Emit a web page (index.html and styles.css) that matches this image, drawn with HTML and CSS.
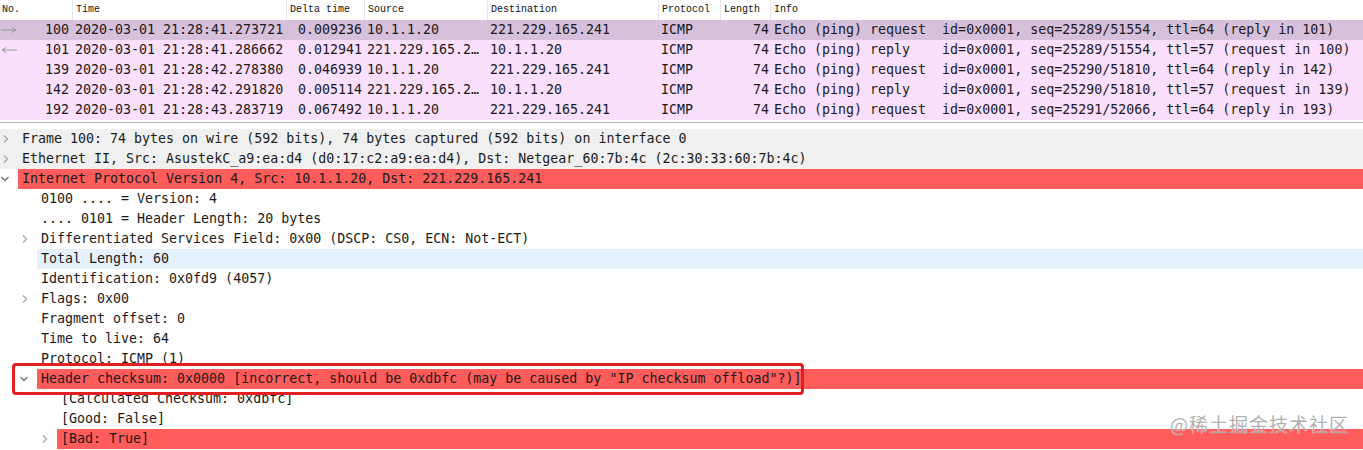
FILE: index.html
```html
<!DOCTYPE html>
<html>
<head>
<meta charset="utf-8">
<link rel="stylesheet" href="styles.css">
</head>
<body>
<div class="app">
  <div class="plist">
    <div class="prow head">
      <div class="c c-no">No.</div>
      <div class="c c-time">Time</div>
      <div class="c c-delta">Delta time</div>
      <div class="c c-src">Source</div>
      <div class="c c-dst">Destination</div>
      <div class="c c-proto">Protocol</div>
      <div class="c c-len">Length</div>
      <div class="c c-info">Info</div>
    </div>
    <div class="prow data sel">
      <div class="c c-no"><svg class="rel" width="18" height="8" viewBox="0 0 18 8"><path d="M1 4H16M12 1.5L16 4L12 6.5" fill="none" stroke="#9a9a9a" stroke-width="1"/></svg><span>100</span></div>
      <div class="c c-time">2020-03-01 21:28:41.273721</div>
      <div class="c c-delta">0.009236</div>
      <div class="c c-src">10.1.1.20</div>
      <div class="c c-dst">221.229.165.241</div>
      <div class="c c-proto">ICMP</div>
      <div class="c c-len">74</div>
      <div class="c c-info">Echo (ping) request  id=0x0001, seq=25289/51554, ttl=64 (reply in 101)</div>
    </div>
    <div class="prow data">
      <div class="c c-no"><svg class="rel" width="18" height="8" viewBox="0 0 18 8"><path d="M2 4H17M6 1.5L2 4L6 6.5" fill="none" stroke="#9a9a9a" stroke-width="1"/></svg><span>101</span></div>
      <div class="c c-time">2020-03-01 21:28:41.286662</div>
      <div class="c c-delta">0.012941</div>
      <div class="c c-src">221.229.165.241</div>
      <div class="c c-dst">10.1.1.20</div>
      <div class="c c-proto">ICMP</div>
      <div class="c c-len">74</div>
      <div class="c c-info">Echo (ping) reply    id=0x0001, seq=25289/51554, ttl=57 (request in 100)</div>
    </div>
    <div class="prow data">
      <div class="c c-no"><span>139</span></div>
      <div class="c c-time">2020-03-01 21:28:42.278380</div>
      <div class="c c-delta">0.046939</div>
      <div class="c c-src">10.1.1.20</div>
      <div class="c c-dst">221.229.165.241</div>
      <div class="c c-proto">ICMP</div>
      <div class="c c-len">74</div>
      <div class="c c-info">Echo (ping) request  id=0x0001, seq=25290/51810, ttl=64 (reply in 142)</div>
    </div>
    <div class="prow data">
      <div class="c c-no"><span>142</span></div>
      <div class="c c-time">2020-03-01 21:28:42.291820</div>
      <div class="c c-delta">0.005114</div>
      <div class="c c-src">221.229.165.241</div>
      <div class="c c-dst">10.1.1.20</div>
      <div class="c c-proto">ICMP</div>
      <div class="c c-len">74</div>
      <div class="c c-info">Echo (ping) reply    id=0x0001, seq=25290/51810, ttl=57 (request in 139)</div>
    </div>
    <div class="prow data">
      <div class="c c-no"><span>192</span></div>
      <div class="c c-time">2020-03-01 21:28:43.283719</div>
      <div class="c c-delta">0.067492</div>
      <div class="c c-src">10.1.1.20</div>
      <div class="c c-dst">221.229.165.241</div>
      <div class="c c-proto">ICMP</div>
      <div class="c c-len">74</div>
      <div class="c c-info">Echo (ping) request  id=0x0001, seq=25291/52066, ttl=64 (reply in 193)</div>
    </div>
  </div>

  <div class="splitter"></div>

  <div class="tree">
    <div class="trow l0 grey">
      <span class="tw"><svg class="chev" width="8" height="10" viewBox="0 0 8 10"><path d="M2 1.5L5.5 5L2 8.5" fill="none" stroke="#a8a8a8" stroke-width="1.3"/></svg></span>
      <span class="lbl">Frame 100: 74 bytes on wire (592 bits), 74 bytes captured (592 bits) on interface 0</span>
    </div>
    <div class="trow l0 grey">
      <span class="tw"><svg class="chev" width="8" height="10" viewBox="0 0 8 10"><path d="M2 1.5L5.5 5L2 8.5" fill="none" stroke="#a8a8a8" stroke-width="1.3"/></svg></span>
      <span class="lbl">Ethernet II, Src: AsustekC_a9:ea:d4 (d0:17:c2:a9:ea:d4), Dst: Netgear_60:7b:4c (2c:30:33:60:7b:4c)</span>
    </div>
    <div class="trow l0">
      <span class="tw"><svg class="chev" width="10" height="8" viewBox="0 0 10 8"><path d="M1.5 2L5 5.5L8.5 2" fill="none" stroke="#707070" stroke-width="1.3"/></svg></span>
      <span class="lbl red">Internet Protocol Version 4, Src: 10.1.1.20, Dst: 221.229.165.241</span>
    </div>
    <div class="trow l1">
      <span class="tw"></span>
      <span class="lbl">0100 .... = Version: 4</span>
    </div>
    <div class="trow l1">
      <span class="tw"></span>
      <span class="lbl">.... 0101 = Header Length: 20 bytes</span>
    </div>
    <div class="trow l1">
      <span class="tw"><svg class="chev" width="8" height="10" viewBox="0 0 8 10"><path d="M2 1.5L5.5 5L2 8.5" fill="none" stroke="#a8a8a8" stroke-width="1.3"/></svg></span>
      <span class="lbl">Differentiated Services Field: 0x00 (DSCP: CS0, ECN: Not-ECT)</span>
    </div>
    <div class="trow l1">
      <span class="tw"></span>
      <span class="lbl hover">Total Length: 60</span>
    </div>
    <div class="trow l1">
      <span class="tw"></span>
      <span class="lbl">Identification: 0x0fd9 (4057)</span>
    </div>
    <div class="trow l1">
      <span class="tw"><svg class="chev" width="8" height="10" viewBox="0 0 8 10"><path d="M2 1.5L5.5 5L2 8.5" fill="none" stroke="#a8a8a8" stroke-width="1.3"/></svg></span>
      <span class="lbl">Flags: 0x00</span>
    </div>
    <div class="trow l1">
      <span class="tw"></span>
      <span class="lbl">Fragment offset: 0</span>
    </div>
    <div class="trow l1">
      <span class="tw"></span>
      <span class="lbl">Time to live: 64</span>
    </div>
    <div class="trow l1">
      <span class="tw"></span>
      <span class="lbl">Protocol: ICMP (1)</span>
    </div>
    <div class="trow l1">
      <span class="tw"><svg class="chev" width="10" height="8" viewBox="0 0 10 8"><path d="M1.5 2L5 5.5L8.5 2" fill="none" stroke="#707070" stroke-width="1.3"/></svg></span>
      <span class="lbl red">Header checksum: 0x0000 [incorrect, should be 0xdbfc (may be caused by "IP checksum offload"?)]</span>
    </div>
    <div class="trow l2">
      <span class="tw"></span>
      <span class="lbl">[Calculated Checksum: 0xdbfc]</span>
    </div>
    <div class="trow l2">
      <span class="tw"></span>
      <span class="lbl">[Good: False]</span>
    </div>
    <div class="trow l2">
      <span class="tw"><svg class="chev" width="8" height="10" viewBox="0 0 8 10"><path d="M2 1.5L5.5 5L2 8.5" fill="none" stroke="#a8a8a8" stroke-width="1.3"/></svg></span>
      <span class="lbl red">[Bad: True]</span>
    </div>
  </div>

  <div class="annot"></div>
  <div class="watermark">@稀土掘金技术社区</div>
</div>
</body>
</html>
```

FILE: styles.css
```css
html, body {
  margin: 0;
  padding: 0;
  background: #ffffff;
}

.app {
  position: relative;
  width: 1363px;
  height: 450px;
  overflow: hidden;
  font-family: "DejaVu Sans Mono", "Liberation Mono", monospace;
  font-size: 13.3px;
  color: #1a1a1a;
}

.prow {
  display: grid;
  grid-template-columns: 72px 214px 78px 123px 171px 62px 50px 1fr;
  height: 20px;
  line-height: 20px;
}

.c {
  white-space: pre;
  overflow: hidden;
  text-overflow: ellipsis;
  padding: 0 3px;
}

.head {
  background: #ffffff;
  font-family: "Liberation Mono", monospace;
  font-size: 10px;
  color: #111;
}

.head .c {
  border-left: 1px solid #e6e6e6;
  padding-left: 3px;
}

.head .c-no {
  border-left: none;
  padding-left: 2px;
}

.data {
  background: #fbe0fd;
}

.data.sel {
  background: #d7c0db;
}

.data .c-no {
  display: flex;
  align-items: center;
  justify-content: space-between;
  padding: 0 3px 0 0;
}

.data .c-no span {
  margin-left: auto;
}

.rel {
  display: block;
  margin-left: 0;
}

.data .c-time {
  padding: 0 0 0 3px;
  text-overflow: clip;
}

.data .c-delta,
.data .c-len {
  text-align: right;
}

.data .c-delta {
  padding-right: 2px;
}

.data .c-len {
  padding-right: 1px;
}

.data .c-info {
  padding-left: 4px;
}

.splitter {
  height: 8px;
  border-top: 2px solid #ffffff;
  box-sizing: border-box;
  position: relative;
}

.splitter::before {
  content: "";
  display: block;
  height: 1px;
  background: #b4b4b4;
}

.tree {
  display: flex;
  flex-direction: column;
  padding-top: 1px;
}

.trow {
  display: flex;
  height: 20px;
  line-height: 20px;
  white-space: pre;
}

.trow.grey {
  background: #f0f0f0;
}

.tw {
  flex: none;
  display: flex;
  align-items: center;
  justify-content: flex-end;
  padding-right: 8px;
  box-sizing: border-box;
}

.l0 .tw { width: 18px; }
.l1 .tw { width: 37px; }
.l2 .tw { width: 57px; }

.lbl {
  flex: 1;
  padding-left: 4px;
}

.lbl.red {
  background: #ff5c5c;
}

.lbl.hover {
  background: #e5f2fd;
}

.chev {
  display: block;
}

.annot {
  position: absolute;
  left: 12px;
  top: 363px;
  width: 786px;
  height: 26px;
  border: 3px solid #e41f22;
  border-radius: 4px;
}

.watermark {
  position: absolute;
  right: 14px;
  top: 412px;
  font-family: "Noto Sans CJK SC", "Noto Sans", sans-serif;
  font-size: 19px;
  line-height: 24px;
  letter-spacing: 1px;
  color: rgba(150, 150, 150, 0.75);
  text-shadow: 0 0 1px rgba(255, 255, 255, 0.9);
}
```
